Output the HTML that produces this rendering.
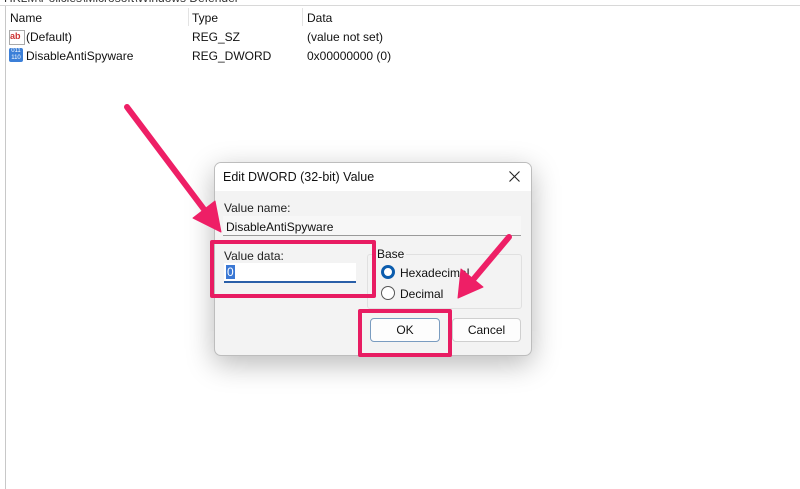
<!DOCTYPE html>
<html><head><style>
body{margin:0;width:800px;height:489px;background:#fff;position:relative;overflow:hidden;font-family:"Liberation Sans",sans-serif;font-size:12px;color:#111}
.a{position:absolute}
.btn{position:absolute;background:#fdfdfd;border:1px solid #cfcfcf;border-radius:4px;text-align:center;line-height:22px;font-size:12px}
</style></head><body>
<div class="a" style="left:0;top:0;width:800px;height:6px;overflow:hidden;background:#fff"><div style="position:absolute;top:-9px;left:4px;font-size:12px;color:#333">HKLM\Policies\Microsoft\Windows Defender</div></div>
<div class="a" style="left:0;top:5px;width:800px;height:1px;background:#d8d8d8"></div>
<div class="a" style="left:5px;top:6px;width:1px;height:483px;background:#c8c8c8"></div>
<div class="a" style="left:188px;top:8px;width:1px;height:18px;background:#e3e3e3"></div>
<div class="a" style="left:302px;top:8px;width:1px;height:18px;background:#e3e3e3"></div>
<div class="a" style="left:10px;top:11px">Name</div>
<div class="a" style="left:192px;top:11px">Type</div>
<div class="a" style="left:307px;top:11px">Data</div>
<div class="a" style="left:9px;top:30px;width:14px;height:13px;border:1px solid #aaa;background:#fff;font-size:9px;color:#c33;font-weight:bold;line-height:10px">ab</div>
<div class="a" style="left:26px;top:30px">(Default)</div>
<div class="a" style="left:192px;top:30px">REG_SZ</div>
<div class="a" style="left:307px;top:30px">(value not set)</div>
<div class="a" style="left:9px;top:48px;width:14px;height:14px;background:#3b7fd8;border-radius:2px;font-size:6px;color:#fff;line-height:7px;text-align:center">011<br>110</div>
<div class="a" style="left:26px;top:49px">DisableAntiSpyware</div>
<div class="a" style="left:192px;top:49px">REG_DWORD</div>
<div class="a" style="left:307px;top:49px">0x00000000 (0)</div>

<div class="a" style="left:214px;top:162px;width:316px;height:192px;background:#f3f3f3;border:1px solid #bdbdbd;border-radius:7px;box-shadow:0 8px 28px rgba(0,0,0,.28);overflow:hidden">
 <div style="position:absolute;left:0;top:0;width:316px;height:28px;background:#fff"></div>
 <div style="position:absolute;left:8px;top:7px;font-size:12.5px">Edit DWORD (32-bit) Value</div>
 <svg style="position:absolute;left:294px;top:8px" width="11" height="11"><path d="M0.5 0.5L10.5 10.5M10.5 0.5L0.5 10.5" stroke="#222" stroke-width="1.1"/></svg>
 <div style="position:absolute;left:9px;top:38px;color:#222">Value name:</div>
 <div style="position:absolute;left:8px;top:53px;width:298px;height:19px;background:#f7f7f7;border-bottom:1px solid #9a9a9a"></div>
 <div style="position:absolute;left:11px;top:57px">DisableAntiSpyware</div>
 <div style="position:absolute;left:9px;top:86px;color:#222">Value data:</div>
 <div style="position:absolute;left:9px;top:100px;width:132px;height:18px;background:#fff;border-bottom:2px solid #2a5fa8"></div>
 <div style="position:absolute;left:11px;top:102px;background:#3b78d4;color:#fff;padding:0 1px">0</div>
 <div style="position:absolute;left:152px;top:91px;width:153px;height:53px;border:1px solid #e0e0e0;border-radius:3px"></div>
 <div style="position:absolute;left:160px;top:84px;background:#f3f3f3;padding:0 2px">Base</div>
 <div style="position:absolute;left:166px;top:102px;width:8px;height:8px;border:3px solid #0b5cad;border-radius:50%;background:#fff"></div>
 <div style="position:absolute;left:185px;top:103px">Hexadecimal</div>
 <div style="position:absolute;left:166px;top:123px;width:12px;height:12px;border:1px solid #555;border-radius:50%;background:#fff"></div>
 <div style="position:absolute;left:185px;top:124px">Decimal</div>
</div>
<div class="btn" style="left:370px;top:318px;width:68px;height:22px;border-color:#7a9cc0">OK</div>
<div class="btn" style="left:452px;top:318px;width:67px;height:22px">Cancel</div>

<div class="a" style="left:210px;top:240px;width:158px;height:50px;border:4px solid #e81c62;border-radius:2px"></div>
<div class="a" style="left:358px;top:309px;width:86px;height:40px;border:4px solid #e81c62;border-radius:2px"></div>
<svg class="a" style="left:0;top:0" width="800" height="489">
 <g fill="#ee1f66" stroke="#ee1f66" stroke-linejoin="round">
  <line x1="127" y1="107" x2="206" y2="212" stroke-width="6" stroke-linecap="round"/>
  <polygon points="221,232 193,218 215,201"/>
  <line x1="509" y1="237" x2="472" y2="281" stroke-width="6" stroke-linecap="round"/>
  <polygon points="458,298 461,269 483,287"/>
 </g>
</svg>
</body></html>
